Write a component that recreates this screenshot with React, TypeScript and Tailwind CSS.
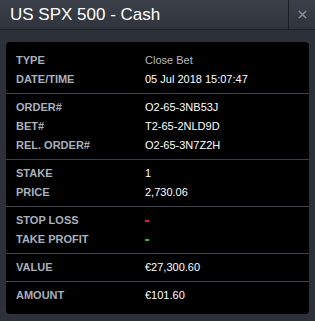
import React from "react";

type Row = { label: string; value: string; tone?: "muted" | "red" | "green" };

const SECTIONS: Row[][] = [
  [
    { label: "TYPE", value: "Close Bet", tone: "muted" },
    { label: "DATE/TIME", value: "05 Jul 2018 15:07:47" },
  ],
  [
    { label: "ORDER#", value: "O2-65-3NB53J" },
    { label: "BET#", value: "T2-65-2NLD9D" },
    { label: "REL. ORDER#", value: "O2-65-3N7Z2H" },
  ],
  [
    { label: "STAKE", value: "1" },
    { label: "PRICE", value: "2,730.06" },
  ],
  [
    { label: "STOP LOSS", value: "-", tone: "red" },
    { label: "TAKE PROFIT", value: "-", tone: "green" },
  ],
  [{ label: "VALUE", value: "€27,300.60" }],
  [{ label: "AMOUNT", value: "€101.60" }],
];

function Value({ row }: { row: Row }) {
  // stop loss / take profit show a small coloured dash
  if (row.tone === "red" || row.tone === "green") {
    return (
      <span
        className={`inline-block w-[4px] h-[2px] mt-[1px] ${row.tone === "red" ? "bg-[#e0262a]" : "bg-[#1fc42a]"}`}
        aria-label={row.value}
      />
    );
  }
  return <span className={row.tone === "muted" ? "text-[#b4b8bf]" : "text-white"}>{row.value}</span>;
}

export default function App() {
  return (
    <div
      className="w-[315px] h-[321px] bg-[#2c3038] flex flex-col overflow-hidden"
      style={{ fontFamily: '"Liberation Sans", Arial, sans-serif' }}
    >
      {/* Header */}
      <div className="flex h-[30px] bg-gradient-to-b from-[#3b404a] to-[#30343c] border-b border-[#1c1f24]">
        <div className="flex-1 flex items-center pl-[10px] text-white text-[17px] leading-none">
          US SPX 500 - Cash
        </div>
        <div className="w-[27px] border-l border-[#1c1f24] flex items-center justify-center text-[#8b9099]">
          <svg viewBox="0 0 10 10" className="w-[9px] h-[9px]" fill="none" stroke="currentColor" strokeWidth={1.6}>
            <path d="M1 1l8 8M9 1l-8 8" />
          </svg>
        </div>
      </div>

      {/* Details panel */}
      <div className="mx-[6px] mt-[12px] bg-black rounded-[4px] pt-[5px] pb-[5px] text-[11px]">
        {SECTIONS.map((rows, i) => (
          <div key={i} className={`py-[4px] ${i > 0 ? "border-t border-[#3c4048]" : ""}`}>
            {rows.map((r) => (
              <div key={r.label} className="flex items-center h-[19px]">
                <span className="w-[139px] pl-[10px] font-bold text-[#a9b1bd]">{r.label}</span>
                <Value row={r} />
              </div>
            ))}
          </div>
        ))}
      </div>
    </div>
  );
}
